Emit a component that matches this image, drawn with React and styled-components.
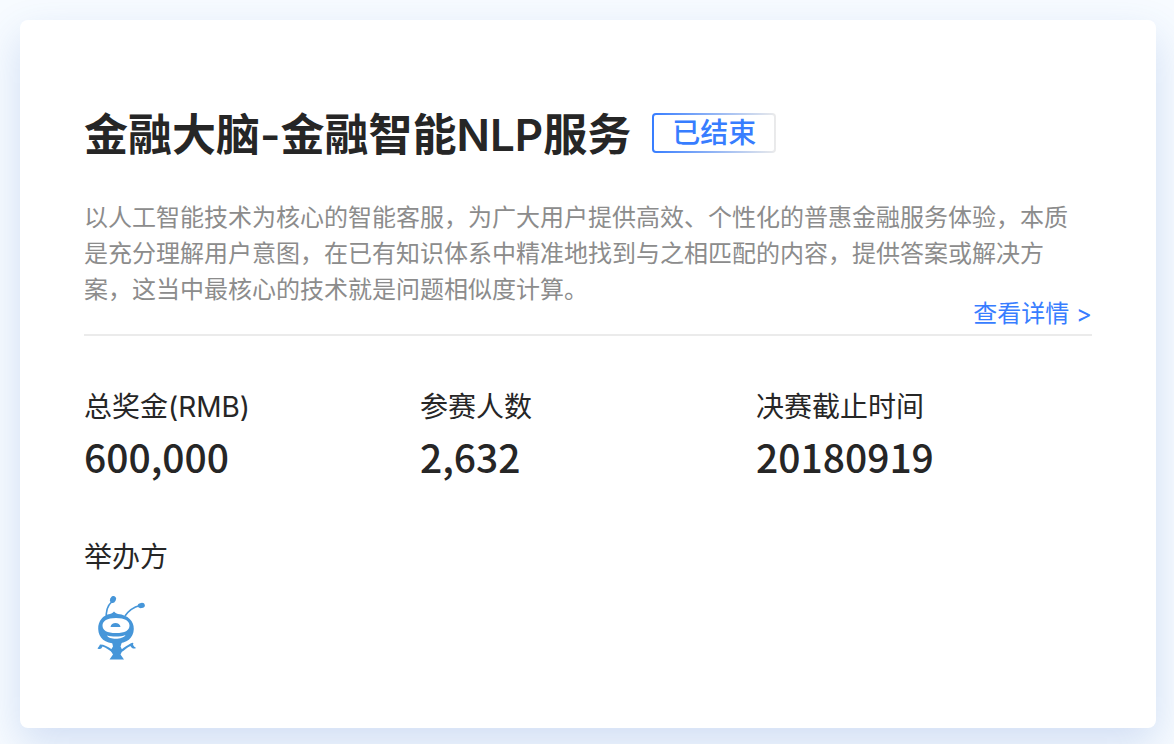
import React from 'react';
import styled, { createGlobalStyle } from 'styled-components';

const GlobalStyle = createGlobalStyle`
  * { box-sizing: border-box; }
  body {
    margin: 0;
    background: #f7fbff;
    color: #262626;
    font-family: Inter, "Noto Sans CJK SC", sans-serif;
  }
`;

const Page = styled.main`
  display: flex;
  min-height: 100vh;
  padding: 20px 18px 16px 20px;
`;

const Card = styled.article`
  flex: 1;
  padding: 80px 64px 64px;
  border-radius: 8px;
  background: #fff;
  box-shadow: 0 16px 40px rgba(60, 110, 200, 0.2);
`;

const Header = styled.header`
  display: flex;
  align-items: center;
  gap: 21px;
  height: 66px;
`;

const Title = styled.h1`
  margin: 0;
  padding-top: 4px;
  font-size: 44px;
  line-height: 66px;
  font-weight: 600;
`;

const Status = styled.span`
  padding: 0 18px;
  border: 2px solid transparent;
  border-radius: 4px;
  background:
    linear-gradient(#fff, #fff) padding-box,
    linear-gradient(90deg, #377dff, #ebebeb) border-box;
  color: #377dff;
  font-size: 28px;
  line-height: 36px;
  font-weight: 500;
`;

const Summary = styled.p`
  margin: 34px 0 0;
  padding-right: 20px;
  color: #8c8c8c;
  font-size: 24px;
  line-height: 36px;
`;

const Detail = styled.div`
  display: flex;
  justify-content: flex-end;
  margin-top: -8px;
  padding-bottom: 6px;
  border-bottom: 2px solid #ebebeb;
`;

const DetailLink = styled.a`
  color: #377dff;
  font-size: 24px;
  line-height: 28px;
  text-decoration: none;
`;

const Stats = styled.dl`
  display: grid;
  grid-template-columns: repeat(3, 1fr);
  margin: 49px 0 0;
`;

const Label = styled.dt`
  font-size: 28px;
  line-height: 44px;
`;

const Value = styled.dd`
  margin: 0;
  font-family: "Noto Sans CJK SC", sans-serif;
  font-size: 39px;
  line-height: 54px;
  font-weight: 500;
`;

const Organizer = styled.section`
  margin-top: 52px;
`;

const OrganizerLabel = styled.h2`
  margin: 0;
  font-size: 28px;
  line-height: 44px;
  font-weight: 400;
`;

const Logo = styled.svg`
  display: block;
  width: 64px;
  height: 64px;
  margin-top: 17px;
`;

const stats = [
  ['总奖金(RMB)', '600,000'],
  ['参赛人数', '2,632'],
  ['决赛截止时间', '20180919'],
];

function AntLogo() {
  return (
    <Logo viewBox="4 6 64 64" role="img" aria-label="举办方标志" fill="#4696d9">
      <path d="M26.500 29C25.500 21 27 16 32 11.500M45 26C49 20 54 17 60 15.500" fill="none" stroke="#4696d9" strokeWidth="1.600" />
      <ellipse cx="33" cy="9.500" rx="2.800" ry="3.600" transform="rotate(25 33 9.500)" />
      <ellipse cx="61.300" cy="15.500" rx="3.600" ry="2.600" transform="rotate(-8 61.300 15.500)" />
      <path fillRule="evenodd" d="M34 21.500C35 22.500 36 23.500 38 24C48 25 54 31 53.800 39C53.500 48 47 53.500 36 53.500C25 53.500 18.500 48 18.200 39C18 31 23 25 30 24C32 23.500 33 22.500 34 21.500ZM36 28C27 28 22.500 31 22.500 35.500C22.500 40.500 27 43 36 43C45 43 49.500 40.500 49.500 35.500C49.500 31 45 28 36 28ZM27 45.500C29 50 43 50 45.500 45C41 47 32 47 27 45.500Z" />
      <path d="M30.500 37C31 31.500 40 31.500 40.500 37Z" />
      <path d="M32 52H42L40.500 56.500L42.500 60.500L40.500 64.500L44 69.500H29.500L33 64.500L30.500 60.500L33 56.500Z" />
      <path d="M32 59.500C28 56.500 24 54.500 20 54.500C19 57 18 57.500 17.500 58.500C20.500 60 22 58 22.500 56.500C26 57.500 29 60 32 62ZM41.500 59.500C45 56.500 48 55 50.500 53.500C53 52 54 53 53 54.500C53.500 56.500 55 57 56 58C54 59.500 51 58 50.500 56C47 57.500 45 60 41.500 62Z" />
    </Logo>
  );
}

export default function App() {
  return (
    <>
      <GlobalStyle />
      <Page lang="zh-CN">
        <Card>
          <Header>
            <Title>金融大脑-金融智能NLP服务</Title>
            <Status>已结束</Status>
          </Header>
          <Summary>
            以人工智能技术为核心的智能客服，为广大用户提供高效、个性化的普惠金融服务体验，本质是充分理解用户意图，在已有知识体系中精准地找到与之相匹配的内容，提供答案或解决方案，这当中最核心的技术就是问题相似度计算。
          </Summary>
          <Detail>
            <DetailLink href="#detail">查看详情 &gt;</DetailLink>
          </Detail>
          <Stats>
            {stats.map(([label, value]) => (
              <div key={label}>
                <Label>{label}</Label>
                <Value>{value}</Value>
              </div>
            ))}
          </Stats>
          <Organizer>
            <OrganizerLabel>举办方</OrganizerLabel>
            <AntLogo />
          </Organizer>
        </Card>
      </Page>
    </>
  );
}
